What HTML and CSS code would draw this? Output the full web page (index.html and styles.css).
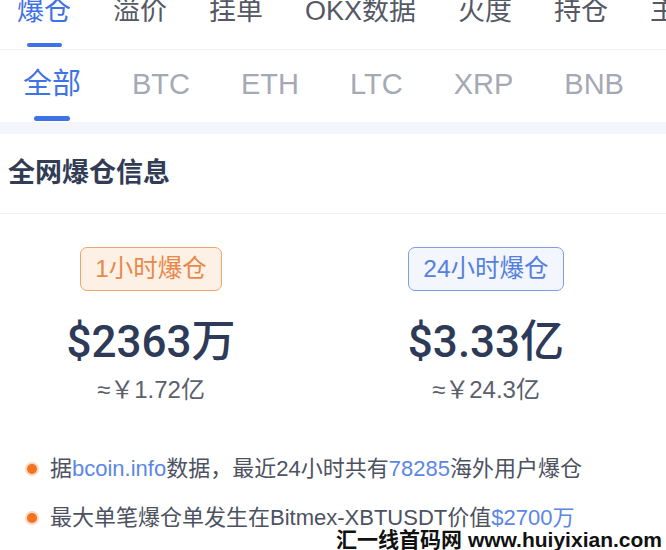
FILE: index.html
```html
<!DOCTYPE html>
<html>
<head>
  <meta charset="utf-8">
  <title>爆仓</title>
  <link rel="stylesheet" href="styles.css">
</head>
<body>
  <div class="page">
    <nav class="tabs">
      <a class="tab active"><span>爆仓</span><i class="bar"></i></a>
      <a class="tab"><span>溢价</span></a>
      <a class="tab"><span>挂单</span></a>
      <a class="tab"><span>OKX数据</span></a>
      <a class="tab"><span>火度</span></a>
      <a class="tab"><span>持仓</span></a>
      <a class="tab"><span>主力</span></a>
    </nav>

    <nav class="coins">
      <a class="coin active"><span>全部</span><i class="bar"></i></a>
      <a class="coin"><span>BTC</span></a>
      <a class="coin"><span>ETH</span></a>
      <a class="coin"><span>LTC</span></a>
      <a class="coin"><span>XRP</span></a>
      <a class="coin"><span>BNB</span></a>
    </nav>

    <div class="band"></div>

    <section class="card">
      <h2 class="card-title">全网爆仓信息</h2>

      <div class="stats">
        <div class="stat">
          <span class="badge badge-orange">1小时爆仓</span>
          <div class="amount">$2363万</div>
          <div class="cny">≈￥1.72亿</div>
        </div>
        <div class="stat">
          <span class="badge badge-blue">24小时爆仓</span>
          <div class="amount">$3.33亿</div>
          <div class="cny">≈￥24.3亿</div>
        </div>
      </div>

      <ul class="notes">
        <li><i class="dot"></i><span>据<em>bcoin.info</em>数据，最近24小时共有<em>78285</em>海外用户爆仓</span></li>
        <li><i class="dot"></i><span>最大单笔爆仓单发生在Bitmex-XBTUSDT价值<em>$2700万</em></span></li>
      </ul>
    </section>

    <div class="watermark">汇一线首码网 www.huiyixian.com</div>
  </div>
</body>
</html>
```

FILE: styles.css
```css
html, body { margin: 0; padding: 0; background: #fff; }
body { font-family: "Liberation Sans", "Noto Sans CJK SC", sans-serif; overflow: hidden; }
.page { position: relative; width: 666px; height: 550px; overflow: hidden; }

.tabs { display: flex; gap: 42px; padding: 0 0 2px 17px; margin-top: -2px; border-bottom: 1px solid #eef0f4; white-space: nowrap; }
.tab { display: flex; flex-direction: column; align-items: center; font-size: 27px; line-height: 27px; color: #545965; }
.tab.active { color: #3f72e6; }
.tab .bar { display: block; width: 35px; height: 4px; margin-top: 18px; border-radius: 2px; background: #3f72e6; }

.coins { display: flex; gap: 51px; padding: 20px 0 1px 23px; white-space: nowrap; }
.coin { display: flex; flex-direction: column; align-items: center; font-size: 29px; line-height: 29px; color: #a5a9b5; }
.coin.active { color: #3f72e6; }
.coin .bar { display: block; width: 36px; height: 5px; margin-top: 17px; border-radius: 3px; background: #3f72e6; }

.band { height: 12px; background: #f3f5fa; }

.card-title { margin: 0; padding: 26px 0 26px 8px; font-size: 27px; line-height: 27px; font-weight: 700; color: #323c55; border-bottom: 1px solid #f0f1f5; }

.stats { display: grid; grid-template-columns: 302px 368px; margin-top: 33px; }
.stat { display: flex; flex-direction: column; align-items: center; }
.badge { box-sizing: border-box; height: 44px; padding: 0 14px; border-radius: 7px; font-size: 24.5px; line-height: 42px; border: 1.5px solid; }
.badge-orange { color: #e8894b; border-color: #f0a36c; background: #fdf1e6; }
.badge-blue { color: #5580e0; border-color: #7e9de6; background: #f3f6fd; }
.amount { margin-top: 29px; font-family: Roboto, "Noto Sans CJK SC", sans-serif; font-size: 44px; line-height: 44px; color: #2d3a58; font-weight: 500; }
.cny { margin-top: 14px; font-size: 24px; line-height: 24px; color: #5b606d; }

.notes { list-style: none; margin: 54px 0 0; padding: 0; display: flex; flex-direction: column; gap: 23px; }
.notes li { display: flex; align-items: center; gap: 13px; padding-left: 27px; font-size: 22px; line-height: 26px; color: #4d5261; }
.notes em { font-style: normal; color: #5c86e6; }
.dot { width: 10px; height: 10px; border-radius: 50%; background: #f2741f; box-shadow: 0 0 0 2px #fcd9c0; flex: none; }

.watermark { position: absolute; right: 4px; top: 531px; font-size: 21px; line-height: 18px; font-weight: 700; color: #111; white-space: nowrap; }
```
